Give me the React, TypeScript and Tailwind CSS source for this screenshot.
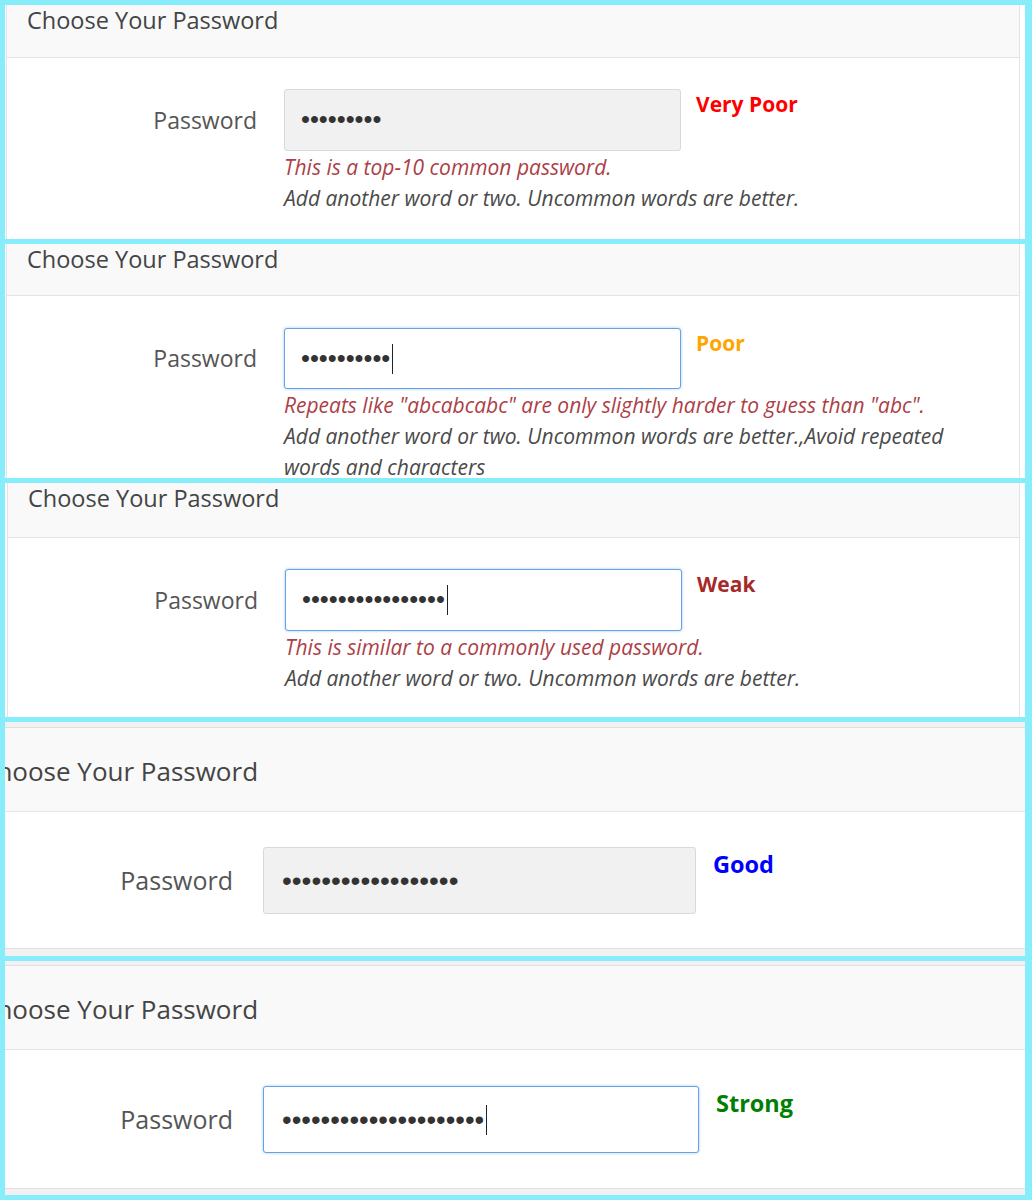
import React from "react";

type Rating = { text: string; color: string };

const CYAN = "bg-[#88edfb]";
const SANS = "font-['Open_Sans','Noto_Sans',sans-serif]";

function Dots({ count, caret, size }: { count: number; caret?: boolean; size: string }) {
  return (
    <div className="flex items-center">
      <span className={`font-['Liberation_Sans',sans-serif] leading-none text-[#333] ${size}`}>
        {"•".repeat(count)}
      </span>
      {caret && <span className="ml-[2px] inline-block h-[30px] w-px bg-[#222]" />}
    </div>
  );
}

// small-scale screenshots (frames 1-3)
function SmallFrame({
  shift,
  headerH,
  bodyPt,
  inputH,
  dots,
  caret,
  focused,
  rating,
  error,
  hint,
}: {
  shift: string;
  headerH: string;
  bodyPt: string;
  inputH: string;
  dots: number;
  caret?: boolean;
  focused?: boolean;
  rating: Rating;
  error: string;
  hint: string;
}) {
  return (
    <div className="h-[234px] overflow-hidden bg-white">
      <div className={`mr-[5px] h-full border-x border-[#e4e4e4] ${shift} ${SANS}`}>
        <div
          className={`border-b border-[#e4e4e4] bg-[#f9f9f9] pl-[20px] text-[23.5px] leading-[30px] text-[#444] ${headerH}`}
        >
          Choose Your Password
        </div>
        <div className={`flex ${bodyPt}`}>
          <div className={`flex w-[250px] items-center justify-end text-[23px] text-[#555] ${inputH}`}>
            Password
          </div>
          <div className="ml-[27px] w-[690px] shrink-0">
            <div className="flex">
              <div
                className={`flex w-[397px] items-center rounded-[3px] border pl-[16px] ${inputH} ${
                  focused
                    ? "border-[#66a3e3] bg-white shadow-[0_0_3px_rgba(102,163,227,0.6)]"
                    : "border-[#d9d9d9] bg-[#f1f1f1]"
                }`}
              >
                <Dots count={dots} caret={caret} size="text-[25.5px]" />
              </div>
              <div
                className="ml-[15px] mt-px text-[21px] font-bold leading-[28px]"
                style={{ color: rating.color }}
              >
                {rating.text}
              </div>
            </div>
            <div className="mt-px text-[21px] italic leading-[31px]">
              <div className="text-[#ad3f47]">{error}</div>
              <div className="text-[#4a4a4a]">{hint}</div>
            </div>
          </div>
        </div>
      </div>
    </div>
  );
}

// zoomed-in screenshots (frames 4-5)
function LargeFrame({
  topGap,
  bottomGap,
  bodyH,
  bodyPt,
  inputW,
  ratingMl,
  dots,
  dotSize,
  caret,
  focused,
  rating,
}: {
  topGap: string;
  bottomGap: string;
  bodyH: string;
  bodyPt: string;
  inputW: string;
  ratingMl: string;
  dots: number;
  dotSize: string;
  caret?: boolean;
  focused?: boolean;
  rating: Rating;
}) {
  return (
    <div className={`flex h-[234px] flex-col overflow-hidden bg-[#f1f1f1] ${SANS}`}>
      <div className={topGap} />
      <div className="border-y border-[#e0e0e0] bg-white">
        <div className="flex h-[84px] items-center border-b border-[#e4e4e4] bg-[#f9f9f9] pt-[3px]">
          <span className="-ml-[25px] whitespace-nowrap text-[26px] text-[#444]">Choose Your Password</span>
        </div>
        <div className={`flex ${bodyH} ${bodyPt}`}>
          <div className="flex h-[67px] w-[228px] items-center justify-end text-[25px] text-[#555]">Password</div>
          <div
            className={`ml-[30px] flex h-[67px] shrink-0 items-center rounded-[3px] border pl-[18px] ${inputW} ${
              focused
                ? "border-[#66a3e3] bg-white shadow-[0_0_3px_rgba(102,163,227,0.6)]"
                : "border-[#d9d9d9] bg-[#f1f1f1]"
            }`}
          >
            <Dots count={dots} caret={caret} size={dotSize} />
          </div>
          <div
            className={`mt-[2px] text-[23.5px] font-bold leading-[30px] ${ratingMl}`}
            style={{ color: rating.color }}
          >
            {rating.text}
          </div>
        </div>
      </div>
      <div className={bottomGap} />
    </div>
  );
}

export default function App() {
  const hint = "Add another word or two. Uncommon words are better.";
  return (
    <div className={`flex h-[1200px] w-[1032px] flex-col gap-[5px] pb-[5px] pl-[5px] pr-[7px] pt-[5px] ${CYAN}`}>
      <SmallFrame
        shift="ml-px"
        headerH="h-[53px]"
        bodyPt="pt-[31px]"
        inputH="h-[62px]"
        dots={9}
        rating={{ text: "Very Poor", color: "#ff0000" }}
        error="This is a top-10 common password."
        hint={hint}
      />
      <SmallFrame
        shift="ml-px"
        headerH="h-[52px]"
        bodyPt="pt-[32px]"
        inputH="h-[61px]"
        dots={10}
        caret
        focused
        rating={{ text: "Poor", color: "#ffa500" }}
        error={'Repeats like "abcabcabc" are only slightly harder to guess than "abc".'}
        hint="Add another word or two. Uncommon words are better.,Avoid repeated words and characters"
      />
      <SmallFrame
        shift="ml-[2px]"
        headerH="h-[55px]"
        bodyPt="pt-[31px]"
        inputH="h-[62px]"
        dots={16}
        caret
        focused
        rating={{ text: "Weak", color: "#a52a2a" }}
        error="This is similar to a commonly used password."
        hint={hint}
      />
      <LargeFrame
        topGap="h-[5px]"
        bottomGap="h-[7px]"
        bodyH="h-[136px]"
        bodyPt="pt-[35px]"
        inputW="w-[433px]"
        ratingMl="ml-[17px]"
        dots={18}
        dotSize="text-[28px]"
        rating={{ text: "Good", color: "#0000ff" }}
      />
      <LargeFrame
        topGap="h-[4px]"
        bottomGap="h-[6px]"
        bodyH="h-[138px]"
        bodyPt="pt-[36px]"
        inputW="w-[436px]"
        ratingMl="ml-[17px]"
        dots={21}
        dotSize="text-[27.5px]"
        caret
        focused
        rating={{ text: "Strong", color: "#008000" }}
      />
    </div>
  );
}
